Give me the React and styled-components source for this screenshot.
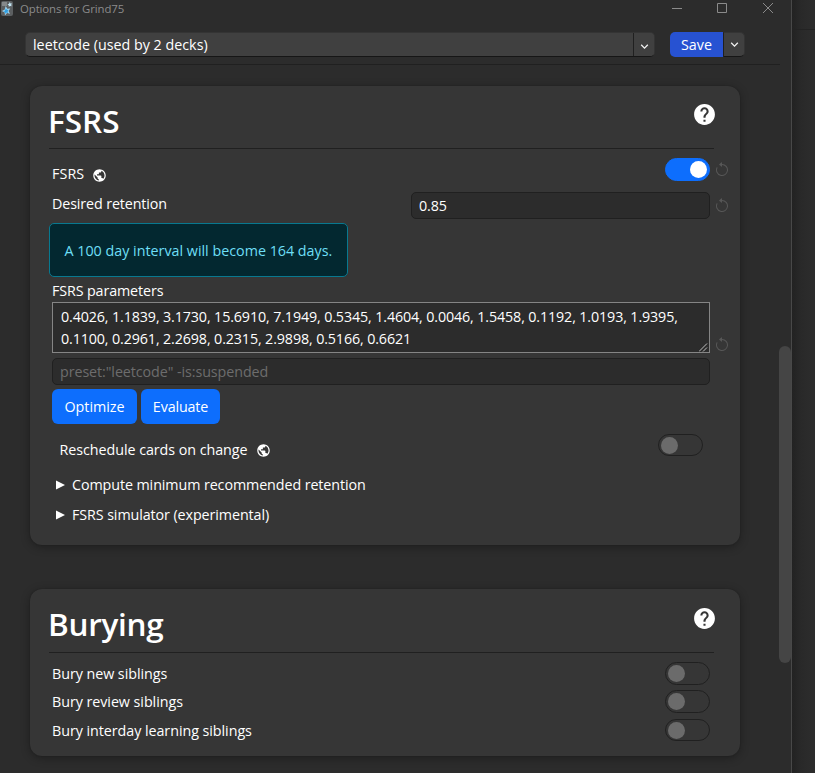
import React from "react";
import styled, { createGlobalStyle } from "styled-components";
import { MdHelp, MdPublic, MdExpandMore } from "react-icons/md";
import { BsArrowCounterclockwise } from "react-icons/bs";

const GlobalStyle = createGlobalStyle`
  *, *::before, *::after { box-sizing: border-box; }
  body { margin: 0; background: #2c2c2c; overflow: hidden; }
  button { font: inherit; letter-spacing: inherit; }
`;

const Desktop = styled.div`
  display: flex;
  width: 815px;
  height: 773px;
  overflow: hidden;
  background: #2c2c2c;
  color: #fff;
  font: 14.3px/22px "Open Sans", "Noto Sans", sans-serif;
`;

const Window = styled.div`
  display: flex;
  flex-direction: column;
  width: 792px;
  flex: none;
  border-right: 1px solid #484848;
`;

const Backdrop = styled.div`
  flex: 1;
  background: linear-gradient(90deg, #222 0, #292929 9px, #2c2c2c 20px);
`;

const BackdropBar = styled.div`
  height: 30px;
  border-bottom: 1px solid #232323;
`;

const TitleBar = styled.header`
  display: flex;
  align-items: center;
  height: 18px;
  padding-left: 1px;
  color: #8b8b8b;
  font-size: 11.4px;
  line-height: 18px;
`;

const AppIcon = styled.svg`
  width: 12px;
  height: 15px;
  flex: none;
  margin: 0 7px 1px 0;
`;

const WindowTitle = styled.span`
  flex: 1;
  letter-spacing: -0.1px;
`;

const WindowButtons = styled.svg`
  width: 104px;
  height: 12px;
  margin: 0 16px 2px 0;
  flex: none;
  fill: none;
  stroke: #8b8b8b;
`;

const Toolbar = styled.div`
  display: flex;
  align-items: flex-start;
  width: 780px;
  height: 47px;
  padding: 14px 0 0 25px;
  border-bottom: 1px solid #202020;
`;

const Select = styled.div`
  display: flex;
  width: 630px;
  height: 25px;
  margin-right: 15px;
  border: 1px solid #343434;
  border-bottom-color: #161616;
  border-radius: 5px;
  background: #404040;
  overflow: hidden;
`;

const SelectLabel = styled.span`
  flex: 1;
  padding: 1px 0 0 7px;
`;

const Arrow = styled.button`
  display: flex;
  align-items: center;
  justify-content: center;
  width: 21px;
  padding: 3px 0 0;
  border: 0;
  border-left: 1px solid #202020;
  background: #404040;
  color: #f2f2f2;
`;

const SaveButton = styled.button`
  width: 53px;
  height: 25px;
  padding: 0;
  border: 0;
  border-radius: 5px 0 0 5px;
  background: #2752d2;
  color: #fff;
`;

const SaveMenu = styled(Arrow)`
  width: 22px;
  height: 25px;
  padding: 0;
  border: 1px solid #343434;
  border-left-color: #202020;
  border-bottom-color: #161616;
  border-radius: 0 5px 5px 0;
`;

const Content = styled.main`
  display: flex;
  flex: 1;
  justify-content: space-between;
`;

const Sections = styled.div`
  display: flex;
  flex-direction: column;
  gap: 44px;
  padding: 21px 0 0 30px;
`;

const Scrollbar = styled.div`
  width: 12px;
  height: 317px;
  margin-top: 281px;
  border-radius: 6px;
  background: #454545;
`;

const Card = styled.section`
  width: 710px;
  height: ${(p) => p.$height}px;
  padding: 0 26px 0 19px;
  border-radius: 12px;
  background: #363636;
  box-shadow: 0 0 1px #1c1c1c, 0 2px 10px rgba(0, 0, 0, 0.32);
`;

const CardHeader = styled.div`
  display: flex;
  justify-content: space-between;
  height: ${(p) => p.$height}px;
  border-bottom: 1px solid #202020;
`;

const Heading = styled.h1`
  margin: 14px 0 0 -1px;
  font-size: 31.5px;
  line-height: 42px;
  font-weight: 600;
  letter-spacing: ${(p) => p.$track || 0}px;
`;

const HelpIcon = styled(MdHelp)`
  width: 25px;
  height: 25px;
  margin: ${(p) => p.$top}px -3px 0 0;
`;

const Row = styled.div`
  display: flex;
  align-items: flex-start;
  justify-content: space-between;
  width: 658px;
  height: ${(p) => p.$height}px;
  margin-left: 3px;
`;

const Label = styled.div`
  display: flex;
  align-items: center;
  height: 22px;
  margin-top: ${(p) => p.$top || 0}px;
  margin-left: ${(p) => p.$indent || 0}px;
  white-space: nowrap;
  letter-spacing: ${(p) => p.$track ?? -0.05}px;
`;

const Globe = styled(MdPublic)`
  width: 15px;
  height: 15px;
  margin: ${(p) => p.$top ?? 3}px 0 0 8px;
`;

const Control = styled.div`
  display: flex;
  align-items: flex-start;
  margin-top: ${(p) => p.$top || 0}px;
  margin-right: ${(p) => (p.$revert ? -20 : p.$inset || 0)}px;
`;

const Revert = styled(BsArrowCounterclockwise)`
  width: 16px;
  height: 16px;
  margin: ${(p) => p.$top}px 0 0 4px;
  color: #575757;
  flex: none;
`;

const Switch = styled.div`
  display: flex;
  align-items: center;
  justify-content: ${(p) => (p.$on ? "flex-end" : "flex-start")};
  width: 45px;
  height: ${(p) => p.$height || 23}px;
  padding: 0 2px;
  border: 1px solid ${(p) => (p.$on ? "#0d6efd" : "#202020")};
  border-radius: 12px;
  background: ${(p) => (p.$on ? "#0d6efd" : "transparent")};
`;

const Knob = styled.span`
  width: 17px;
  height: 17px;
  border-radius: 50%;
  background: ${(p) => (p.$on ? "#fff" : "#6b6b6b")};
`;

const Field = styled.div`
  width: ${(p) => p.$width}px;
  height: 27px;
  padding: 1px 7px 0;
  border: 1px solid #202020;
  border-radius: 5px;
  background: #2c2c2c;
  color: ${(p) => (p.$muted ? "#6d6d6d" : "#fff")};
  line-height: 24px;
  letter-spacing: -0.08px;
`;

const Notice = styled.div`
  width: 299px;
  height: 54px;
  padding-left: 14.5px;
  border: 1px solid #087990;
  border-radius: 5px;
  background: #032830;
  color: #6edff6;
  line-height: 53px;
  white-space: nowrap;
`;

const Parameters = styled.div`
  display: flex;
  justify-content: space-between;
  width: 658px;
  height: 51px;
  padding: 3px 1px 0 8px;
  border: 1px solid #858585;
  background: #2c2c2c;
`;

const ParameterLine = styled.div`
  white-space: nowrap;
  letter-spacing: -0.127px;
`;

const Grip = styled.svg`
  width: 9px;
  height: 9px;
  align-self: flex-end;
  stroke: #c0c0c0;
  flex: none;
`;

const Buttons = styled.div`
  display: flex;
  gap: 4px;
  margin: 4px 0 0 3px;
`;

const PrimaryButton = styled.button`
  width: ${(p) => p.$width}px;
  height: 35px;
  padding: 0;
  border: 0;
  border-radius: 6px;
  background: #0d6efd;
  color: #fff;
  letter-spacing: ${(p) => p.$track || 0}px;
`;

const Disclosure = styled.svg`
  width: 9px;
  height: 10px;
  margin-right: 7px;
  fill: #fff;
`;

function Toggle({ on, height }) {
  return (
    <Switch $on={on} $height={height}>
      <Knob $on={on} />
    </Switch>
  );
}

function Summary({ children, top, track }) {
  return (
    <Label $top={top} $indent={7} $track={track}>
      <Disclosure viewBox="0 0 9 10"><path d="M0 .5v9L9 5z" /></Disclosure>
      {children}
    </Label>
  );
}

export default function App() {
  return (
    <>
      <GlobalStyle />
      <Desktop>
        <Window>
          <TitleBar>
            <AppIcon viewBox="0 0 12 15">
              <rect width="12" height="15" rx="2" fill="#5c5f61" />
              <path d="M1 1h5v4H1z" fill="#85898b" />
              <path d="M4.800 5l1.400 2.700 3-.1-1.700 2.400 1.500 2.700-2.900-.6L4 14.200l-.4-2.900-2.700-1.300 2.700-1.300z" fill="#a9dcf5" />
              <path d="M4.900 7l.9 1.700 1.900.1-1.100 1.500.8 1.700-1.800-.4-1.300 1.300-.3-1.800-1.600-.9 1.600-.8z" fill="#2f9ee2" />
              <path d="M8.800 1l.7 1.400 1.600.1-.9 1.300.4 1.500-1.500-.4-1.400.9v-1.600L6.400 3.200l1.600-.5z" fill="#c4e6f4" />
            </AppIcon>
            <WindowTitle>Options for Grind75</WindowTitle>
            <WindowButtons viewBox="0 0 104 12">
              <path d="M1 6.500h10M46.500 1.500h9v9h-9zM92 1l10 10M102 1L92 11" />
            </WindowButtons>
          </TitleBar>
          <Toolbar>
            <Select>
              <SelectLabel>leetcode (used by 2 decks)</SelectLabel>
              <Arrow aria-label="Choose preset"><MdExpandMore size={15} /></Arrow>
            </Select>
            <SaveButton>Save</SaveButton>
            <SaveMenu aria-label="More actions"><MdExpandMore size={15} /></SaveMenu>
          </Toolbar>
          <Content>
            <Sections>
              <Card $height={459}>
                <CardHeader $height={63}>
                  <Heading>FSRS</Heading>
                  <HelpIcon $top={16} />
                </CardHeader>
                <Row $height={43}>
                  <Label $top={14} $track={0.1}>FSRS<Globe /></Label>
                  <Control $top={9} $revert>
                    <Toggle on />
                    <Revert $top={4} />
                  </Control>
                </Row>
                <Row $height={31}>
                  <Label $top={1} $track={-0.12}>Desired retention</Label>
                  <Control $revert>
                    <Field $width={299}>0.85</Field>
                    <Revert $top={6} />
                  </Control>
                </Row>
                <Notice>A 100 day interval will become 164 days.</Notice>
                <Row $height={25}>
                  <Label $top={3} $track={-0.12}>FSRS parameters</Label>
                </Row>
                <Row $height={56}>
                  <Control $revert>
                    <Parameters>
                      <div>
                        <ParameterLine>0.4026, 1.1839, 3.1730, 15.6910, 7.1949, 0.5345, 1.4604, 0.0046, 1.5458, 0.1192, 1.0193, 1.9395,</ParameterLine>
                        <ParameterLine>0.1100, 0.2961, 2.2698, 0.2315, 2.9898, 0.5166, 0.6621</ParameterLine>
                      </div>
                      <Grip viewBox="0 0 9 9"><path d="M0 8.500L8 .5M4 8.500L8 4.500" /></Grip>
                    </Parameters>
                    <Revert $top={35} />
                  </Control>
                </Row>
                <Row $height={27}>
                  <Field $width={658} $muted>preset:"leetcode" -is:suspended</Field>
                </Row>
                <Buttons>
                  <PrimaryButton $width={85}>Optimize</PrimaryButton>
                  <PrimaryButton $width={79} $track={-0.15}>Evaluate</PrimaryButton>
                </Buttons>
                <Row $height={50}>
                  <Label $top={15} $indent={7.5}>Reschedule cards on change<Globe $top={1} /></Label>
                  <Control $top={10} $inset={7}><Toggle height={22} /></Control>
                </Row>
                <Summary track={-0.09}>Compute minimum recommended retention</Summary>
                <Summary top={8} track={-0.09}>FSRS simulator (experimental)</Summary>
              </Card>
              <Card $height={167}>
                <CardHeader $height={64}>
                  <Heading $track={-0.3}>Burying</Heading>
                  <HelpIcon $top={17} />
                </CardHeader>
                <Row $height={37}>
                  <Label $top={10}>Bury new siblings</Label>
                  <Control $top={9}><Toggle /></Control>
                </Row>
                <Row $height={29}>
                  <Label $top={1}>Bury review siblings</Label>
                  <Control><Toggle /></Control>
                </Row>
                <Row $height={29}>
                  <Label $top={1}>Bury interday learning siblings</Label>
                  <Control><Toggle height={22} /></Control>
                </Row>
              </Card>
            </Sections>
            <Scrollbar />
          </Content>
        </Window>
        <Backdrop><BackdropBar /></Backdrop>
      </Desktop>
    </>
  );
}
